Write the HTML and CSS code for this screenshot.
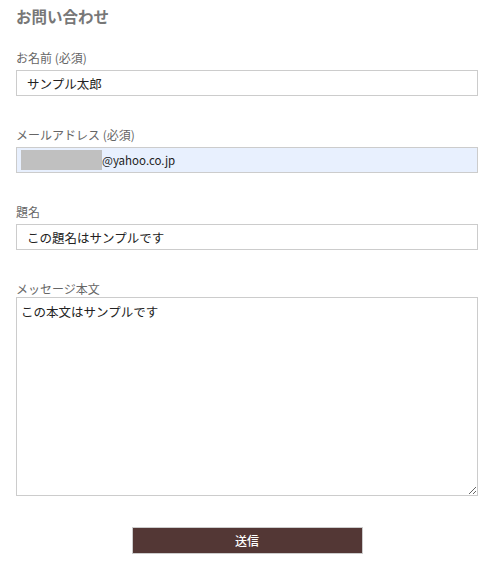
FILE: index.html
```html
<!DOCTYPE html>
<html lang="ja">
<head>
<meta charset="utf-8">
<title>お問い合わせ</title>
<link rel="stylesheet" href="styles.css">
</head>
<body>
<form class="contact">
  <h1 class="title">お問い合わせ</h1>

  <div class="field">
    <label class="label" for="name">お名前 (必須)</label>
    <input class="input indent" id="name" type="text" value="サンプル太郎">
  </div>

  <div class="field">
    <label class="label">メールアドレス (必須)</label>
    <div class="input autofill"><span class="redact"></span><span class="domain">@yahoo.co.jp</span></div>
  </div>

  <div class="field">
    <label class="label" for="subject">題名</label>
    <input class="input indent" id="subject" type="text" value="この題名はサンプルです">
  </div>

  <div class="field field-last">
    <label class="label label-tight" for="body">メッセージ本文</label>
    <textarea class="textarea" id="body">この本文はサンプルです</textarea>
  </div>

  <div class="actions">
    <button class="submit" type="button">送信</button>
  </div>
</form>
</body>
</html>
```

FILE: styles.css
```css
* {
  box-sizing: border-box;
}

html, body {
  margin: 0;
  padding: 0;
  background: #ffffff;
}

body {
  font-family: "Noto Sans CJK JP", "Noto Sans", "Liberation Sans", sans-serif;
  color: #333333;
}

.contact {
  padding: 0 14px 0 16px;
}

.title {
  margin: 4px 0 21px;
  font-size: 15.5px;
  line-height: 24px;
  font-weight: 700;
  color: #777777;
}

.field {
  margin-bottom: 30px;
}

.field-last {
  margin-bottom: 0;
}

.label {
  display: block;
  font-size: 12px;
  line-height: 18px;
  color: #666666;
  margin-bottom: 3px;
}

.label-tight {
  margin-bottom: -1px;
}

.input {
  display: block;
  width: 100%;
  height: 26px;
  margin: 0;
  padding: 0 4px;
  border: 1px solid #cccccc;
  border-radius: 0;
  background: #ffffff;
  font-family: inherit;
  font-size: 12.5px;
  line-height: 24px;
  color: #222222;
  outline: none;
}

.indent {
  padding-left: 10px;
}

.autofill {
  display: flex;
  align-items: center;
  background: #e8f0fe;
}

.redact {
  display: block;
  width: 81px;
  height: 20px;
  background: #c0c0c0;
}

.domain {
  font-size: 11.5px;
  color: #222222;
}

.textarea {
  display: block;
  width: 100%;
  height: 199px;
  margin: 0;
  padding: 4px 4px;
  border: 1px solid #cccccc;
  border-radius: 0;
  font-family: inherit;
  font-size: 12.5px;
  line-height: 20px;
  color: #222222;
  resize: both;
  outline: none;
}

.actions {
  display: flex;
  justify-content: center;
  padding-top: 31px;
}

.submit {
  width: 231px;
  height: 27px;
  margin: 0;
  padding: 0;
  border: 1px solid #cccccc;
  background: #533735;
  color: #ffffff;
  font-family: inherit;
  font-size: 12px;
  font-weight: 500;
  line-height: 25px;
  cursor: pointer;
}
```
